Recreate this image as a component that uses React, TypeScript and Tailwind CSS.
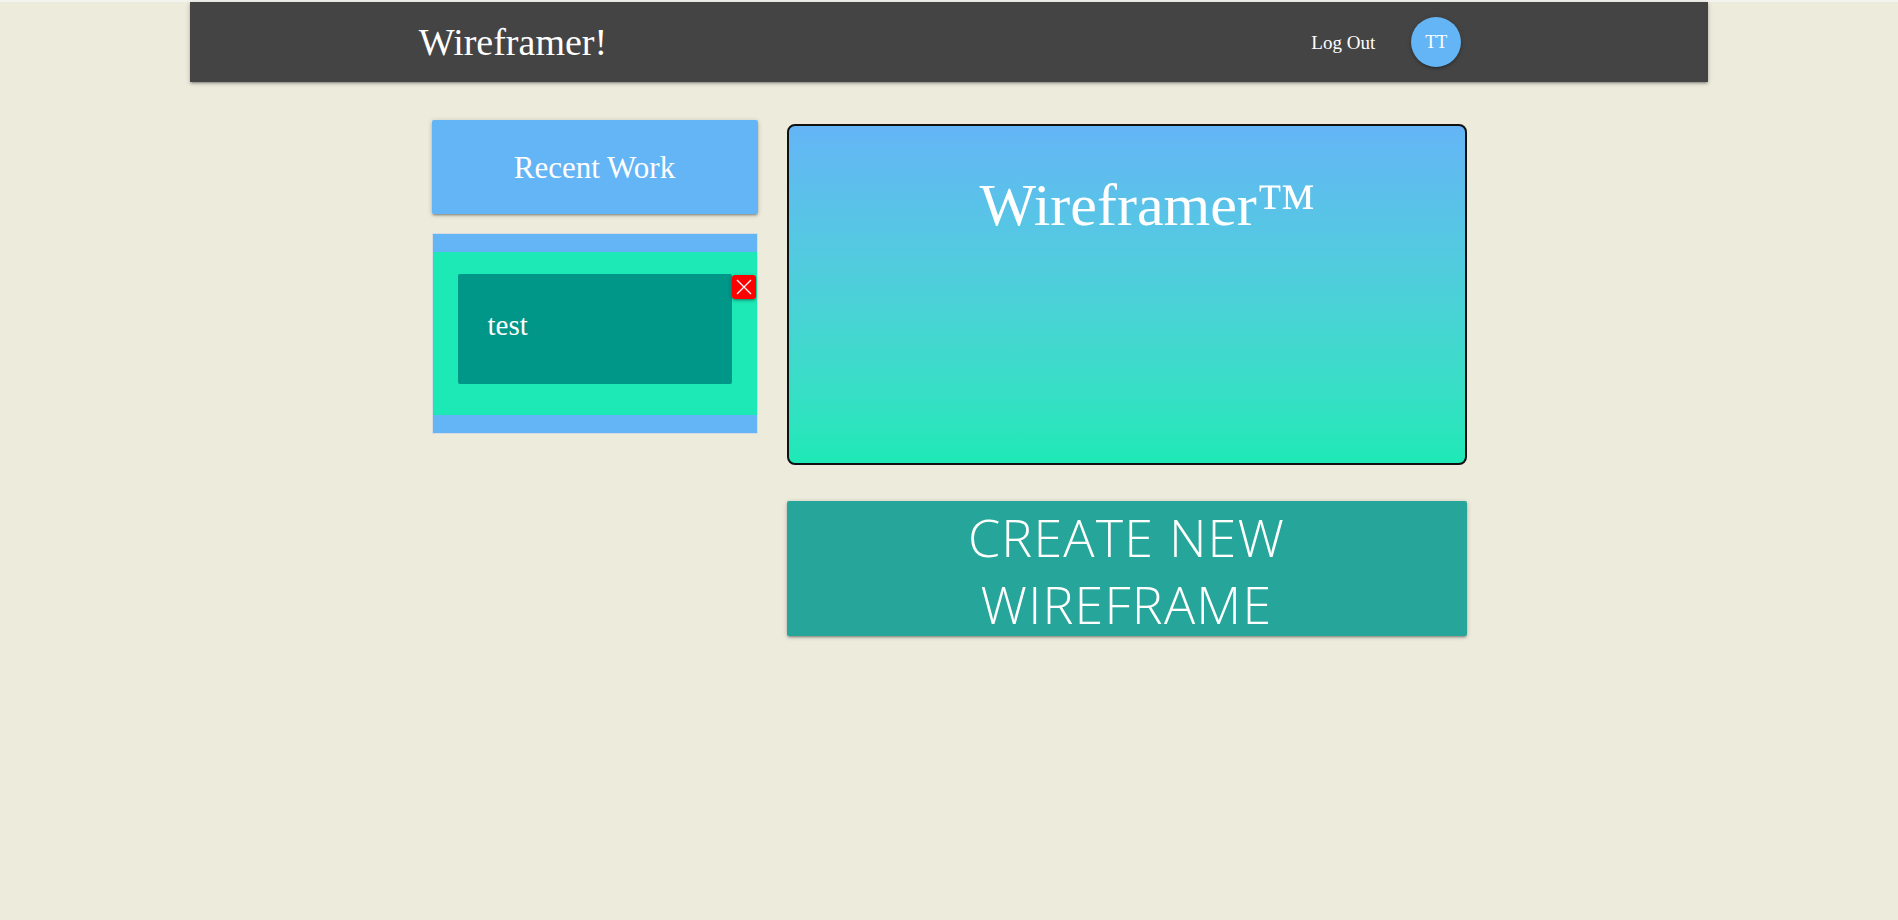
const serif = "font-['Liberation_Serif','Times_New_Roman',serif]";
const card = "shadow-[0_2px_2px_0_rgba(0,0,0,0.14),0_3px_1px_-2px_rgba(0,0,0,0.12),0_1px_5px_0_rgba(0,0,0,0.2)]";

const Navbar = () => {
  return (
    <nav className={`mx-auto flex h-[80px] w-[80%] items-center bg-[#444444] pl-[229px] pr-[247px] text-white ${card} ${serif}`}>
      <a className="text-[38px] leading-[38px]">Wireframer!</a>
      <div className="ml-auto flex items-center gap-[36px]">
        <a className="text-[19px] leading-[19px]">Log Out</a>
        <div className={`flex h-[50px] w-[50px] items-center justify-center rounded-full bg-[#64b5f6] text-[18px] ${card}`}>
          TT
        </div>
      </div>
    </nav>
  );
};

const RecentWork = () => {
  return (
    <div className="flex w-[326px] flex-col pt-[38px]">
      <div className={`flex h-[94px] items-center justify-center rounded-[2px] bg-[#64b5f6] text-[31px] leading-[31px] text-white ${card}`}>
        Recent Work
      </div>
      <div className="mt-[19px] border border-[#d5dce2] bg-[#64b5f6] py-[18px]">
        <div className="flex bg-[#1de9b6] pb-[31px] pl-[25px] pr-[1px] pt-[22px]">
          <div className="h-[110px] w-[274px] rounded-[2px] bg-[#009688] pl-[30px] pt-[37px] text-[29px] leading-[29px] text-white">
            test
          </div>
          <button className={`mt-[1px] flex h-[24px] w-[24px] items-center justify-center rounded-[3px] bg-[#ff0000] ${card}`}>
            <svg width="16" height="16" viewBox="0 0 16 16">
              <path d="M1 1 L15 15 M15 1 L1 15" stroke="white" strokeWidth="1.3" />
            </svg>
          </button>
        </div>
      </div>
    </div>
  );
};

const Banner = () => {
  return (
    <div className="flex w-[680px] flex-col pt-[42px]">
      <div className="h-[341px] rounded-[8px] border-2 border-[#111111] bg-gradient-to-b from-[#64b5f6] to-[#1de9b6] pl-[42px] pt-[49px] text-center text-[60px] leading-[60px] text-white">
        Wireframer™
      </div>
      <button className={`mt-[36px] h-[135px] rounded-[2px] bg-[#26a69a] pt-[2px] font-['Open_Sans',sans-serif] text-[52px] font-light leading-[67px] tracking-[1.2px] text-white ${card}`}>
        <span className="block">CREATE NEW</span>
        <span className="block">WIREFRAME</span>
      </button>
    </div>
  );
};

export default function App() {
  return (
    <div className={`min-h-screen bg-[#ecebdc] ${serif}`}>
      <div className="h-[2px] bg-[#f3f3ef]" />
      <Navbar />
      <main className="mx-auto flex w-[1035px] gap-[29px]">
        <RecentWork />
        <Banner />
      </main>
    </div>
  );
}
